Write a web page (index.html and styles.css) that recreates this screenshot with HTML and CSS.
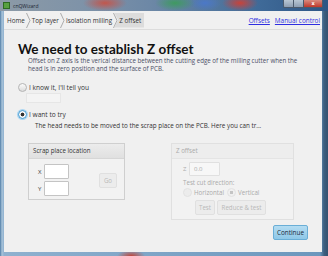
FILE: index.html
```html
<!DOCTYPE html>
<html lang="en">
<head>
    <meta charset="UTF-8">
    <title>cnQWizard</title>
    <link rel="stylesheet" href="styles.css">
</head>
<body>

<div class="titlebar">
    <span class="app-icon"></span>
    <span class="app-title">cnQWizard</span>
    <div class="caption-btns">
        <span class="cb cb-min"></span>
        <span class="cb cb-max"></span>
        <span class="cb cb-close">x</span>
    </div>
</div>

<div class="client">
    <div class="crumbbar">
        <nav class="crumbs">
            <span class="crumb">Home</span>
            <svg class="sep" width="5" height="15" viewBox="0 0 5 15"><path d="M0.5 0 L4 7.5 L0.5 15" fill="none" stroke="#9a9a9a" stroke-width="0.8"/></svg>
            <span class="crumb">Top layer</span>
            <svg class="sep" width="5" height="15" viewBox="0 0 5 15"><path d="M0.5 0 L4 7.5 L0.5 15" fill="none" stroke="#9a9a9a" stroke-width="0.8"/></svg>
            <span class="crumb">Isolation milling</span>
            <svg class="sep" width="5" height="15" viewBox="0 0 5 15"><path d="M0.5 0 L4 7.5 L0.5 15" fill="none" stroke="#9a9a9a" stroke-width="0.8"/></svg>
            <span class="crumb current">Z offset</span>
        </nav>
        <div class="links">
            <a href="#">Offsets</a>
            <a href="#">Manual control</a>
        </div>
    </div>

    <div class="page">
        <h1>We need to establish Z offset</h1>
        <p class="intro">Offset on Z axis is the verical distance between the cutting edge of the milling cutter when the<br>head is in zero position and the surface of PCB.</p>

        <label class="radio"><span class="dot"></span>I know it, I'll tell you</label>
        <div class="ghost-field"></div>

        <label class="radio checked"><span class="dot"></span>I want to try</label>
        <p class="hint">The head needs to be moved to the scrap place on the PCB. Here you can tr...</p>

        <div class="panels">
            <section class="box scrap">
                <div class="box-head">Scrap place location</div>
                <div class="scrap-body">
                    <div class="coords">
                        <div class="coord"><span class="lbl">X</span><span class="field"></span></div>
                        <div class="coord"><span class="lbl">Y</span><span class="field"></span></div>
                    </div>
                    <span class="btn btn-off go">Go</span>
                </div>
            </section>

            <section class="box zbox">
                <div class="box-head">Z offset</div>
                <div class="z-body">
                    <div class="coord"><span class="lbl">Z</span><span class="field zfield">0.0</span></div>
                    <div class="cut-label">Test cut direction:</div>
                    <div class="cut-opts">
                        <span class="mini-radio"><span class="dot"></span>Horizontal</span>
                        <span class="mini-radio on"><span class="dot"></span>Vertical</span>
                    </div>
                    <div class="z-btns">
                        <span class="btn btn-off">Test</span>
                        <span class="btn btn-off">Reduce &amp; test</span>
                    </div>
                </div>
            </section>
        </div>

        <div class="actions">
            <span class="btn primary">Continue</span>
        </div>
    </div>
</div>

</body>
</html>
```

FILE: styles.css
```css
body {
    margin: 0;
    width: 328px;
    height: 256px;
    overflow: hidden;
    font-family: "Open Sans", sans-serif;
    background:
        radial-gradient(ellipse 14px 6px at 40% 100%, #c0473c, transparent),
        linear-gradient(90deg, #4f7da6 0, #a9c4da 2px, #8fb1cf 4px, #6c97bd 320px, #3d5f80 324px, #35516e 328px);
    color: #222;
}
.titlebar {
    height: 11px;
    display: flex;
    align-items: center;
    padding-left: 3px;
    background:
        radial-gradient(ellipse 22px 8px at 105px 3px, #c2564c, transparent),
        radial-gradient(ellipse 20px 8px at 175px 3px, #3f9a60, transparent),
        radial-gradient(ellipse 16px 8px at 205px 3px, #4b78c8, transparent),
        radial-gradient(ellipse 18px 8px at 240px 3px, #c8423a, transparent),
        linear-gradient(90deg, #8c9aa6 0, #7f93a8 80px, #6d88a6 150px, #3f6a98 260px, #2e5584 328px);
}
.app-icon {
    width: 5px;
    height: 5px;
    background: #58a040;
    border: 1px solid #2e6a22;
}
.app-title {
    margin-left: 3px;
    font-size: 5px;
    color: #1b2430;
}
.caption-btns {
    margin-left: auto;
    margin-right: 5px;
    display: flex;
    align-self: flex-start;
}
.cb {
    height: 8px;
    width: 10px;
    border: 1px solid #4b5a6c;
    border-top: none;
    background: linear-gradient(#b8c6d4, #8e9fb3);
    box-sizing: border-box;
}
.cb-min, .cb-max {
    border-right: none;
}
.cb-min {
    border-bottom-left-radius: 2px;
}
.cb-close {
    width: 20px;
    background: linear-gradient(#d98a7e, #c0392b);
    color: #fff;
    font: bold 5px "DejaVu Sans", sans-serif;
    text-align: center;
    line-height: 7px;
    border-bottom-right-radius: 2px;
}
.client {
    margin: 0 6px 0 4px;
    height: 241px;
    background: #f0f0f0;
    display: flex;
    flex-direction: column;
}
.crumbbar {
    height: 18px;
    display: flex;
    align-items: center;
    border-bottom: 1px solid #dcdcdc;
    padding: 0 2px 0 3px;
}
.crumbs {
    display: flex;
    align-items: center;
    height: 15px;
    font-size: 6.3px;
    color: #333;
}
.sep {
    margin: 0 1px;
}
.crumb.current {
    background: #dcdcdc;
    height: 15px;
    line-height: 15px;
    padding: 0 3px 0 5px;
    margin-left: -5px;
    clip-path: polygon(0 0, 100% 0, 100% 100%, 0 100%, 4px 50%);
}
.links {
    margin-left: auto;
    display: flex;
    gap: 5px;
    font-size: 6.4px;
}
.links a {
    color: #2e2ee0;
}
.page {
    flex: 1;
    padding: 12px 14px 12px 14px;
    display: flex;
    flex-direction: column;
}
h1 {
    margin: 0;
    font-family: Lato, "Open Sans", sans-serif;
    font-size: 13.5px;
    line-height: 14px;
    font-weight: bold;
    color: #111;
}
.intro {
    margin: 1px 0 0 10px;
    font-size: 6.2px;
    line-height: 8px;
    color: #4a4f66;
}
.radio {
    margin-top: 9px;
    display: flex;
    align-items: center;
    height: 10px;
    font-size: 6.6px;
    color: #333;
}
.dot {
    width: 7px;
    height: 7px;
    border: 1px solid #b4b4b4;
    border-radius: 50%;
    background: linear-gradient(#fbfbfb, #dcdcdc);
    margin-right: 2px;
    flex: none;
    box-sizing: content-box;
}
.radio.checked {
    margin-top: 6px;
}
.radio.checked .dot {
    border-color: #3e9ad4;
    background: radial-gradient(circle, #333 0, #333 1.6px, #f6f6f6 2.2px);
    box-shadow: 0 0 0 1px #a9d5f2;
}
.ghost-field {
    margin: 1px 0 0 8px;
    width: 35px;
    height: 10px;
    border: 1px solid #e6e6e6;
    background: #f4f4f4;
    box-sizing: border-box;
}
.hint {
    margin: 3px 0 0 17px;
    font-size: 6.3px;
    line-height: 8px;
    color: #333;
}
.panels {
    margin: 13px 0 0 10px;
    display: flex;
    align-items: flex-start;
    gap: 46px;
}
.box {
    border: 1px solid #cfcfcf;
    background: #f2f2f2;
}
.box-head {
    height: 14px;
    line-height: 14px;
    padding-left: 4px;
    background: linear-gradient(#ececec, #e0e0e0);
    border-bottom: 1px solid #d6d6d6;
    font-size: 6.2px;
    color: #333;
}
.scrap {
    width: 97px;
    height: 57px;
    box-sizing: border-box;
}
.scrap-body {
    display: flex;
    align-items: center;
    padding: 5px 0 0 9px;
}
.coords {
    display: flex;
    flex-direction: column;
    gap: 2px;
}
.coord {
    display: flex;
    align-items: center;
    font-size: 6px;
}
.lbl {
    width: 6px;
    color: #444;
}
.field {
    width: 25px;
    height: 15px;
    border: 1px solid #c4c4c4;
    background: #fff;
    box-sizing: border-box;
    border-radius: 1px;
}
.btn {
    display: flex;
    align-items: center;
    justify-content: center;
    height: 15px;
    box-sizing: border-box;
    font-size: 6.2px;
    border: 1px solid #e0e0e0;
    border-radius: 2px;
}
.btn-off {
    background: #ececec;
    color: #b8b8b8;
}
.go {
    width: 18px;
    margin-left: 30px;
}
.zbox {
    width: 123px;
    height: 77px;
    box-sizing: border-box;
    color: #aaa;
}
.zbox .box-head {
    color: #aaa;
    background: #ededed;
    border-bottom-color: #e4e4e4;
}
.zbox, .zbox .field {
    border-color: #e0e0e0;
}
.z-body {
    padding: 3px 0 0 11px;
}
.z-body .lbl {
    color: #aaa;
}
.zfield {
    width: 31px;
    height: 14px;
    background: #f7f7f7;
    padding-left: 4px;
    line-height: 12px;
}
.cut-label {
    margin-top: 2px;
    font-size: 6.2px;
    line-height: 10px;
}
.cut-opts {
    display: flex;
    gap: 3px;
    font-size: 6.2px;
}
.mini-radio {
    display: flex;
    align-items: center;
}
.zbox .dot {
    border-color: #e2e2e2;
    background: #ececec;
}
.zbox .mini-radio.on .dot {
    background: radial-gradient(circle, #c4c4c4 0, #c4c4c4 1.5px, #f0f0f0 2px);
}
.z-btns {
    display: flex;
    gap: 2px;
    margin: 3px 0 0 12px;
}
.z-btns .btn:first-child {
    width: 20px;
}
.z-btns .btn:last-child {
    width: 49px;
}
.actions {
    margin-top: auto;
    display: flex;
    justify-content: flex-end;
}
.primary {
    width: 35px;
    height: 15px;
    border-color: #6aaed6;
    background: linear-gradient(#b4dcf2, #8ec8e8);
    color: #1a2a38;
    font-size: 6.4px;
}
```
